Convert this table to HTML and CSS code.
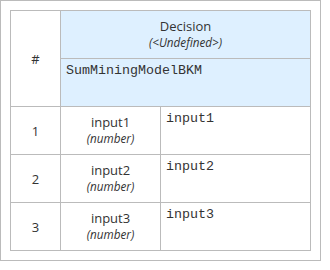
FILE: index.html
```html
<!DOCTYPE html>
<html>
<head>
<meta charset="utf-8">
<link rel="stylesheet" href="styles.css">
</head>
<body>
<div class="frame">
  <table class="dt">
    <colgroup>
      <col class="c1">
      <col class="c2">
      <col class="c3">
    </colgroup>
    <tr>
      <td class="idx" rowspan="2">#</td>
      <td class="head" colspan="2">
        <div class="title">Decision</div>
        <div class="type">(&lt;Undefined&gt;)</div>
      </td>
    </tr>
    <tr>
      <td class="head expr" colspan="2">SumMiningModelBKM</td>
    </tr>
    <tr>
      <td class="idx">1</td>
      <td class="param"><div class="pname">input1</div><div class="type">(number)</div></td>
      <td class="expr">input1</td>
    </tr>
    <tr>
      <td class="idx">2</td>
      <td class="param"><div class="pname">input2</div><div class="type">(number)</div></td>
      <td class="expr">input2</td>
    </tr>
    <tr>
      <td class="idx">3</td>
      <td class="param"><div class="pname">input3</div><div class="type">(number)</div></td>
      <td class="expr">input3</td>
    </tr>
  </table>
</div>
</body>
</html>
```

FILE: styles.css
```css
html, body {
  margin: 0;
  padding: 0;
  background: #fff;
}
body {
  font-family: "Open Sans", sans-serif;
  color: #333;
}
.frame {
  width: 301px;
  border: 1px solid #bbb;
  padding: 9px;
}
.dt {
  border-collapse: collapse;
  width: 301px;
  table-layout: fixed;
}
.c1 { width: 50px; }
.c2 { width: 100px; }
.c3 { width: 150px; }
.dt td {
  border: 1px solid #bbb;
  height: 48px;
  padding: 0;
  box-sizing: border-box;
}
.idx {
  text-align: center;
  vertical-align: middle;
  font-size: 13px;
}
.dt td.head {
  background: #def0ff;
  text-align: center;
  vertical-align: middle;
  padding-bottom: 3px;
}
.title {
  font-size: 13px;
  line-height: 17px;
}
.type {
  font-size: 11.7px;
  font-style: italic;
  line-height: 14px;
}
.dt td.param {
  text-align: center;
  vertical-align: middle;
  padding-bottom: 3px;
}
.pname {
  font-size: 13px;
  line-height: 17px;
}
.dt td.expr {
  font-family: "Courier New", "Nimbus Mono PS", "FreeMono", "Liberation Mono", monospace;
  font-size: 13.333px;
  line-height: 16px;
  text-align: left;
  vertical-align: top;
  padding: 4px 5px;
  color: #333;
}
```
